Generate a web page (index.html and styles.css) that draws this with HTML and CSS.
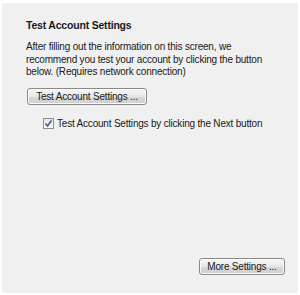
FILE: index.html
```html
<!DOCTYPE html>
<html>
<head>
<meta charset="utf-8">
<link rel="stylesheet" href="styles.css">
</head>
<body>
<div class="panel">
  <div class="content">
    <div class="title">Test Account Settings</div>
    <p class="desc">After filling out the information on this screen, we<br>recommend you test your account by clicking the button<br>below. (Requires network connection)</p>
    <div class="btn-row"><button class="btn btn-test">Test Account Settings ...</button></div>
    <label class="check-row">
      <span class="checkbox"><svg width="9" height="9" viewBox="0 0 9 9"><path d="M1.5 4.5 L3.5 7 L7.5 1.5" fill="none" stroke="#3a5a9a" stroke-width="1.6"/></svg></span>
      <span class="check-label">Test Account Settings by clicking the Next button</span>
    </label>
  </div>
  <div class="footer"><button class="btn btn-more">More Settings ...</button></div>
</div>
</body>
</html>
```
FILE: styles.css
```css
html, body {
  margin: 0;
  padding: 0;
  background: #ffffff;
}
body {
  padding: 3px 2px 2px 2px;
  font-family: "Liberation Sans", Arial, sans-serif;
  font-size: 10px;
  letter-spacing: -0.2px;
  color: #1a1a1a;
}
.panel {
  height: 290px;
  background: #f0f0f0;
  display: flex;
  flex-direction: column;
  box-sizing: border-box;
}
.content {
  padding: 16px 10px 0 24px;
  flex: 1;
}
.title {
  font-weight: bold;
  font-size: 10.5px;
  line-height: 13px;
}
.desc {
  margin: 9px 0 0 0;
  line-height: 12.5px;
  white-space: nowrap;
}
.btn-row {
  margin-top: 9px;
}
.btn {
  font-family: "Liberation Sans", Arial, sans-serif;
  font-size: 10px;
  letter-spacing: -0.2px;
  color: #1a1a1a;
  border: 1px solid #8a8a8a;
  border-radius: 3px;
  background: linear-gradient(#f6f6f6 0%, #e8e8e8 50%, #d8d8d8 51%, #d0d0d0 100%);
  box-shadow: inset 0 0 0 1px #fbfbfb;
  height: 17px;
  padding: 0 4px;
  line-height: 15px;
  margin: 0;
  white-space: nowrap;
}
.btn-test {
  width: 120px;
  margin-left: 1px;
}
.check-row {
  display: flex;
  align-items: center;
  gap: 3px;
  margin-top: 13px;
  margin-left: 17px;
  white-space: nowrap;
}
.checkbox {
  width: 11px;
  height: 11px;
  box-sizing: border-box;
  border: 1px solid #8e8f8f;
  background: linear-gradient(#e6e6e6, #fafafa);
  display: flex;
  align-items: center;
  justify-content: center;
}
.footer {
  display: flex;
  justify-content: flex-end;
  padding: 0 13px 18px 0;
}
.btn-more {
  width: 86px;
}
```
